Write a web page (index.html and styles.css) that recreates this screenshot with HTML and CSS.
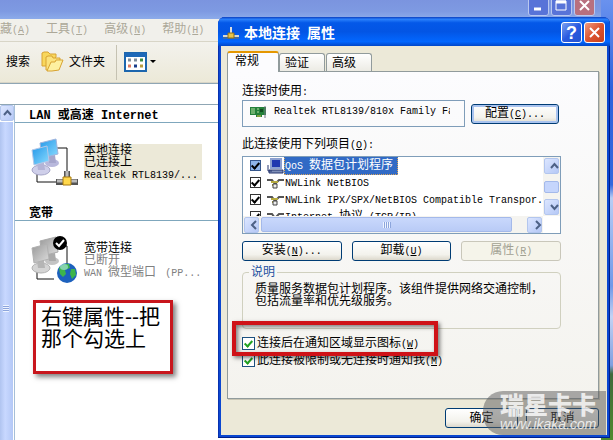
FILE: index.html
```html
<!DOCTYPE html>
<html lang="zh-CN">
  <head>
    <meta charset="UTF-8" />
    <meta name="viewport" content="width=device-width, initial-scale=1.0" />
    <title>本地连接 属性</title>
    <link rel="stylesheet" href="styles.css">
  </head>
  <body>
    <!-- Network connections window -->
    <div class="explorer">
      <div class="explorer-title">
        <button class="cap-btn faded" aria-label="最小化"><svg width="20" height="20"><path d="M5 13h7" stroke="#fff" stroke-width="3"/></svg></button>
        <button class="cap-btn faded" aria-label="最大化"><svg width="20" height="20"><path d="M4 5h10v9H4z" fill="none" stroke="#fff"/><path d="M4 6h10" stroke="#fff" stroke-width="3"/></svg></button>
        <button class="cap-btn faded close" aria-label="关闭"><svg width="20" height="20"><path d="M5 5l9 9M14 5l-9 9" stroke="#fff" stroke-width="2"/></svg></button>
      </div>
      <div class="menubar">
        <span>藏<i>(<u>A</u>)</i></span>
        <span>工具<i>(<u>T</u>)</i></span>
        <span>高级<i>(<u>N</u>)</i></span>
        <span>帮助<i>(<u>H</u>)</i></span>
      </div>
      <div class="toolbar">
        <button class="tool">搜索</button>
        <button class="tool folders">
          <svg width="24" height="22" viewBox="0 0 24 22">
            <path d="M1 15V2l2-1h4l2 2h6v3l-7 9z" fill="#f8d75c" stroke="#d8a332"/>
            <path d="M5 19V6l2-1h4l1 2h7v4l-3 8z" fill="#fbe27c" stroke="#d8a332"/>
            <path d="M6 20l4-9h4l1-2h7l-4 10-7 1z" fill="#fdf0a0" stroke="#d8a332"/>
          </svg>
          文件夹
        </button>
        <button class="tool views" aria-label="查看">
          <svg width="32" height="20" viewBox="0 0 32 20">
            <rect x="1" y="1" width="21" height="18" fill="#fff" stroke="#1c66ae" stroke-width="2"/>
            <path d="M1 3h21" stroke="#1d68b8" stroke-width="4"/>
            <path d="M4 8h3M10 8h3" stroke="#7d8b99" stroke-width="3"/>
            <path d="M16 8h3" stroke="#3c8a41" stroke-width="3"/>
            <path d="M4 14h3" stroke="#dc7a60" stroke-width="3"/>
            <path d="M10 14h3" stroke="#183c8a" stroke-width="3"/>
            <path d="M16 14h3" stroke="#b89c3e" stroke-width="3"/>
            <path d="M26 8h6l-3 3z" fill="#000"/>
          </svg>
        </button>
      </div>
      <div class="address"></div>
      <div class="explorer-body">
        <div class="side-scroll">
          <button class="scroll-btn" aria-label="向上"><svg width="13" height="14"><path d="M3 9l3.500-4 3.500 4" fill="none" stroke="#4d6185" stroke-width="2"/></svg></button>
          <div class="side-thumb"></div>
        </div>
        <div class="connections">
          <h2><b>LAN </b>或高速<b> Internet</b></h2>
          <div class="connection selected">
            <svg width="50" height="50" viewBox="0 0 50 50">
              <defs>
                <linearGradient id="screen" x1="0" y1="0" x2="1" y2="1"><stop offset="0" stop-color="#2497e8"/><stop offset="1" stop-color="#8adcff"/></linearGradient>
                <linearGradient id="dead" x1="0" y1="0" x2="1" y2="1"><stop offset="0" stop-color="#999"/><stop offset="1" stop-color="#ddd"/></linearGradient>
              </defs>
              <path d="M26 10h10v27M6 35v9h20" fill="none" stroke="#111"/>
              <ellipse cx="21" cy="25" rx="7" ry="4" fill="#b8b8dc"/>
              <path d="M17 18l7-1 1 8h-7z" fill="#a6a6cc"/>
              <path d="M9 5l16-4 2 15-16 4z" fill="url(#screen)" stroke="#9fb4dd"/>
              <ellipse cx="10" cy="32" rx="9" ry="5" fill="#cfcfea" stroke="#a5a5c8"/>
              <path d="M6 25l7-1 1 8H7z" fill="#b4b4d6"/>
              <path d="M1 12l15-4 2 15-15 4z" fill="url(#screen)" stroke="#b5c8e8"/>
              <path d="M36 33v6M25 44h22" stroke="#555" stroke-width="6"/>
              <path d="M36 33v6M26 43h20" stroke="#bbb" stroke-width="3"/>
              <path d="M32 39h8v8h-8z" fill="#ffd84c" stroke="#a97b10"/>
            </svg>
            <p>本地连接<br>已连接上<br><i>Realtek RTL8139/...</i></p>
          </div>
          <h2>宽带</h2>
          <div class="connection">
            <svg width="50" height="50" viewBox="0 0 50 50">
              <path d="M26 10h10v18M6 35v8h17" fill="none" stroke="#111"/>
              <ellipse cx="21" cy="25" rx="7" ry="4" fill="#c4c4c4"/>
              <path d="M17 18l7-1 1 8h-7z" fill="#aaa"/>
              <path d="M9 5l16-4 2 15-16 4z" fill="url(#dead)" stroke="#aaa"/>
              <ellipse cx="10" cy="32" rx="9" ry="5" fill="#d4d4d4" stroke="#b0b0b0"/>
              <path d="M6 25l7-1 1 8H7z" fill="#b5b5b5"/>
              <path d="M1 12l15-4 2 15-15 4z" fill="url(#dead)" stroke="#b0b0b0"/>
              <circle cx="29" cy="7" r="7" fill="#000"/>
              <path d="M25 7l3 3 5-6" fill="none" stroke="#fff" stroke-width="2"/>
              <circle cx="36" cy="37" r="10" fill="#1d61bd"/>
              <path d="M28 32q4-5 10-4l1 4-5 2 1 4-3 3-3-3z" fill="#3eb54a"/>
              <path d="M40 33l4 0 1 6-4 4-2-5z" fill="#3eb54a"/>
              <ellipse cx="33" cy="31" rx="4" ry="3" fill="#b6e8f0" opacity=".6"/>
            </svg>
            <p>宽带连接<br><span>已断开<br><i>WAN </i>微型端口 <i> (PP...</i></span></p>
          </div>
        </div>
      </div>
    </div>

    <div class="note">右键属性--把那个勾选上</div>

    <!-- Connection properties dialog -->
    <div class="dialog">
      <div class="dialog-title">
        <svg width="16" height="16" viewBox="0 0 16 16">
          <path d="M0 11h16" stroke="#d8d8d0" stroke-width="2"/><path d="M0 13h16" stroke="#77755a"/><path d="M8 2v7" stroke="#ddd" stroke-width="2"/><path d="M5 8h6v5H5z" fill="#e8c44a" stroke="#8d6e17"/>
        </svg>
        <h1>本地连接&ensp;属性</h1>
        <button class="cap-btn" aria-label="帮助">?</button>
        <button class="cap-btn close" aria-label="关闭"><svg width="20" height="20"><path d="M5 5l9 9M14 5l-9 9" stroke="#fff" stroke-width="2"/></svg></button>
      </div>
      <div class="dialog-body">
        <div class="tabs">
          <button class="tab active">常规</button>
          <button class="tab">验证</button>
          <button class="tab">高级</button>
        </div>
        <div class="panel">
          <p class="caption">连接时使用<i>:</i></p>
          <div class="adapter-row">
            <div class="adapter">
              <svg width="16" height="12" viewBox="0 0 16 12">
                <path d="M0 1h16v8h-4v2H6V9H0z" fill="#23803a"/>
                <path d="M1 3h4M1 5h4M1 7h4M7 3h2M7 6h2" stroke="#b8e0a0"/>
                <path d="M10 3h3v3h-3z" fill="#104c20"/><path d="M7 10h4" stroke="#e0c040"/><path d="M15 0v12" stroke="#778" stroke-width="1"/>
              </svg>
              <i>Realtek RTL8139/810x Family Fast</i>
            </div>
            <button class="btn default">配置<i>(<u>C</u>)...</i></button>
          </div>
          <p class="caption">此连接使用下列项目<i>(<u>O</u>):</i></p>
          <div class="components">
            <ul>
              <li class="current">
                <label><input type="checkbox" checked>
                <svg width="17" height="16" viewBox="0 0 17 16"><path d="M4 1h10v9H4z" fill="#2038b0" stroke="#8ca0d0" stroke-width="2"/><path d="M2 12h14v3H2z" fill="#8090b8" stroke="#24356e"/><path d="M1 7v6h4" fill="none" stroke="#24356e"/></svg>
                <span><i>QoS </i>数据包计划程序</span></label>
              </li>
              <li>
                <label><input type="checkbox" checked>
                <svg width="17" height="16" viewBox="0 0 17 16"><path d="M0 5h5l3 4M17 5h-5L8 9" fill="none" stroke="#555" stroke-width="2"/><path d="M4 7h7M5 10h5" stroke="#b5a93e" stroke-width="2"/><path d="M6 9h4v4H6z" fill="#eee" stroke="#444"/></svg>
                <span><i>NWLink NetBIOS</i></span></label>
              </li>
              <li>
                <label><input type="checkbox" checked>
                <svg width="17" height="16" viewBox="0 0 17 16"><path d="M0 5h5l3 4M17 5h-5L8 9" fill="none" stroke="#555" stroke-width="2"/><path d="M4 7h7M5 10h5" stroke="#b5a93e" stroke-width="2"/><path d="M6 9h4v4H6z" fill="#eee" stroke="#444"/></svg>
                <span><i>NWLink IPX/SPX/NetBIOS Compatible Transpor.</i></span></label>
              </li>
              <li>
                <label><input type="checkbox" checked>
                <svg width="17" height="16" viewBox="0 0 17 16"><path d="M0 5h5l3 4M17 5h-5L8 9" fill="none" stroke="#555" stroke-width="2"/></svg>
                <span><i>Internet </i>协议<i> (TCP/IP)</i></span></label>
              </li>
            </ul>
            <div class="vscroll">
              <button class="scroll-btn" aria-label="向上"><svg width="13" height="14"><path d="M3 9l3.500-4 3.500 4" fill="none" stroke="#4d6185" stroke-width="2"/></svg></button>
              <div class="vthumb"></div>
              <button class="scroll-btn" aria-label="向下"><svg width="13" height="14"><path d="M3 5l3.500 4 3.500-4" fill="none" stroke="#4d6185" stroke-width="2"/></svg></button>
            </div>
            <div class="hscroll">
              <button class="scroll-btn" aria-label="向左"><svg width="13" height="14"><path d="M8 3L4 7l4 4" fill="none" stroke="#4d6185" stroke-width="2"/></svg></button>
              <div class="hthumb"></div>
              <button class="scroll-btn" aria-label="向右"><svg width="13" height="14"><path d="M5 3l4 4-4 4" fill="none" stroke="#4d6185" stroke-width="2"/></svg></button>
            </div>
          </div>
          <div class="actions">
            <button class="btn">安装<i>(<u>N</u>)...</i></button>
            <button class="btn">卸载<i>(<u>U</u>)</i></button>
            <button class="btn" disabled>属性<i>(<u>R</u>)</i></button>
          </div>
          <fieldset>
            <legend>说明</legend>
            质量服务数据包计划程序。该组件提供网络交通控制，包括流量率和优先级服务。
          </fieldset>
          <label class="option"><input type="checkbox" checked><span>连接后在通知区域显示图标<i>(<u>W</u>)</i></span></label>
          <label class="option"><input type="checkbox" checked><span>此连接被限制或无连接时通知我<i>(<u>M</u>)</i></span></label>
          <div class="highlight"></div>
        </div>
        <div class="footer">
          <button class="btn">确定</button>
          <button class="btn">取消</button>
        </div>
      </div>
      <div class="watermark"><b>瑞星卡卡</b><em>www.ikaka.com</em></div>
    </div>
  </body>
</html>
```
FILE: styles.css
```css
* {
  box-sizing: border-box;
}

body {
  margin: 0;
  min-height: 100vh;
  position: relative;
  overflow: hidden;
  font-family: "Liberation Sans", "Noto Sans CJK SC", sans-serif;
  font-size: 12px;
  line-height: 12px;
  color: #000;
  background: linear-gradient(#6a92ee, #2f63dc 20%, #3468dd 42%, #b8cdf4 45%, #6f98e8 65%, #c3d2f3 72%, #7f9fe0 83%, #3e6a3c 85%, #4f8a2e);
}

h1, h2, p, ul {
  margin: 0;
  padding: 0;
}

/* half-width latin text */
i {
  font-family: "Liberation Mono", monospace;
  font-size: 10px;
  font-style: normal;
  white-space: pre;
}

button {
  font: inherit;
  color: inherit;
  padding: 0;
}

svg {
  display: block;
  flex: none;
}

/* Explorer window */
.explorer {
  margin-right: 12px;
  min-height: 100vh;
  display: flex;
  flex-direction: column;
  background: #fff;
}

.explorer-title {
  height: 19px;
  display: flex;
  justify-content: flex-end;
  align-items: flex-end;
  gap: 2px;
  padding: 0 6px 3px;
  background: linear-gradient(#7b94df, #7e9ae2 60%, #8cabea);
}

.cap-btn {
  width: 21px;
  height: 21px;
  flex: none;
  display: flex;
  justify-content: center;
  align-items: center;
  border: 1px solid #fff;
  border-radius: 3px;
  background: linear-gradient(135deg, #7ba0f0, #2a5ae0 50%, #2453d0);
  color: #fff;
  font-size: 18px;
  font-weight: bold;
}

.cap-btn.close {
  background: linear-gradient(135deg, #ef9a80, #dc5430 50%, #c8401c);
}

.cap-btn.faded {
  border-color: #b9c8f0;
  background: #5873d8;
}

.cap-btn.faded.close {
  background: #b8707f;
}

.menubar {
  height: 23px;
  display: flex;
  align-items: center;
  gap: 16px;
  color: #aca899;
  background: #f1f0eb;
  border-bottom: 1px solid #d8d5c7;
}

.toolbar {
  height: 41px;
  display: flex;
  align-items: center;
  padding-left: 6px;
  background: linear-gradient(#f3f2ed, #ece9d8);
  border-bottom: 1px solid #d8d5c7;
}

.tool {
  display: flex;
  align-items: center;
  gap: 4px;
  border: 0;
  background: none;
}

.folders {
  margin: 0 11px 0 11px;
}

.views {
  height: 35px;
  padding-left: 7px;
  border-left: 1px solid #c5c2b2;
}

.address {
  height: 22px;
  border-top: 1px solid #8fa6b4;
  border-bottom: 1px solid #8fa6b4;
}

.explorer-body {
  flex: 1;
  display: flex;
}

.side-scroll {
  width: 15px;
  border-right: 1px solid #a6bfd8;
  background: #fff;
  display: flex;
  flex-direction: column;
}

.scroll-btn {
  width: 15px;
  height: 16px;
  flex: none;
  display: flex;
  align-items: center;
  justify-content: center;
  border: 1px solid #b3c6ee;
  border-radius: 2px;
  background: linear-gradient(135deg, #dce6ff, #b5c8f6);
}

.side-scroll .scroll-btn {
  width: 14px;
}

.side-thumb {
  flex: 1;
  margin: 1px 1px 0 0;
  background:
    repeating-linear-gradient(#eef4ff 0 1px, #8ca5dc 1px 2px) 3px 183px / 6px 7px no-repeat,
    linear-gradient(90deg, #b0c4f0, #c8d8ff 40%, #b4c8f6);
}

.connections {
  flex: 1;
}

.connections h2 {
  height: 18px;
  padding: 4px 14px 0;
  font-size: 12px;
  line-height: 12px;
  border-bottom: 1px solid #7fa7bd;
}

.connections h2 b {
  font-family: "Liberation Mono", monospace;
  white-space: pre;
}

.connection {
  display: flex;
  gap: 3px;
  padding: 15px 0 0 16px;
  height: 80px;
}

.connection p {
  width: 118px;
  height: 36px;
  margin-top: 6px;
}

.connection.selected p {
  background: #ece9d8;
}

.connection p span {
  color: #808080;
}

.note {
  position: absolute;
  left: 33px;
  top: 300px;
  width: 140px;
  height: 74px;
  padding: 3px 5px;
  border: 3px solid #c8161d;
  background: #fff;
  box-shadow: 3px 3px 5px rgba(0, 0, 0, 0.5);
  font-size: 21px;
  line-height: 22px;
}

/* Properties dialog */
.dialog {
  position: absolute;
  left: 218px;
  right: 3px;
  top: 17px;
  padding: 0 3px 3px;
  border-radius: 7px 7px 0 0;
  background: #0b47d0;
  box-shadow: inset -1px -1px #001f8c, inset 1px 0 #0831b0;
}

.dialog-title {
  height: 29px;
  margin: 0 -3px;
  padding: 2px 5px 0;
  display: flex;
  align-items: center;
  gap: 2px;
  border-radius: 7px 7px 0 0;
  color: #fff;
  background: linear-gradient(#0a3fc0, #2a80fb 8%, #0458e8 20%, #0355e4 50%, #0267ff 85%, #0146c8);
}

.dialog-title h1 {
  flex: 1;
  margin-left: 3px;
  font-size: 14px;
  line-height: 16px;
}

.dialog-body {
  padding: 5px 8px 7px 6px;
  background: #ece9d8;
}

.tabs {
  display: flex;
  align-items: flex-end;
  height: 20px;
}

.tab {
  width: 46px;
  height: 18px;
  padding: 0 14px 0 4px;
  margin-right: 1px;
  white-space: nowrap;
  border: 1px solid #919b9c;
  border-bottom: 0;
  border-radius: 3px 3px 0 0;
  background: linear-gradient(#fff, #ecebe4);
}

.tab.active {
  width: 52px;
  height: 21px;
  margin: 0 0 -1px;
  padding: 0 18px 3px 6px;
  position: relative;
  z-index: 1;
  border-top: 2px solid #e59700;
  background: #fcfcfe;
}

.panel {
  position: relative;
  height: 328px;
  padding: 13px 37px 0 14px;
  border: 1px solid #919b9c;
  background: linear-gradient(#fcfcfe, #f4f3ee);
  box-shadow: 1px 1px #c8c5b4;
}

.adapter-row {
  display: flex;
  align-items: center;
  gap: 6px;
  margin: 3px 0 11px;
}

.adapter {
  flex: 1;
  min-width: 0;
  height: 27px;
  display: flex;
  align-items: center;
  gap: 8px;
  padding: 0 14px 3px 7px;
  border: 1px solid #7f9db9;
}

.adapter i {
  flex: 1;
  overflow: hidden;
}

.caption {
  height: 12px;
}

.btn {
  height: 20px;
  border: 1px solid #003c74;
  border-radius: 3px;
  background: linear-gradient(#fff, #f3f2ec 70%, #dcd8cc);
}

.btn.default {
  width: 88px;
  margin-right: 2px;
  box-shadow: inset 0 0 0 2px #a9c3ef;
}

.btn:disabled {
  color: #a1a192;
  border-color: #c9c7ba;
  background: #f5f4ea;
}

.components {
  height: 78px;
  margin-top: 6px;
  display: grid;
  grid-template-columns: 1fr 17px;
  grid-template-rows: 59px 17px;
  border: 1px solid #7f9db9;
  background: #fff;
}

.components ul {
  overflow: hidden;
  list-style: none;
}

.components li {
  height: 17px;
}

.components label {
  display: flex;
  align-items: center;
  height: 17px;
  padding-left: 7px;
}

.components svg {
  margin-left: 6px;
}

.components span {
  padding: 3px 5px 2px 1px;
  white-space: nowrap;
}

.current span {
  color: #fff;
  background: #316ac5;
  outline: 1px dotted #d8a45c;
  outline-offset: -1px;
}

input[type="checkbox"] {
  appearance: none;
  width: 11px;
  height: 11px;
  flex: none;
  margin: 0;
  border: 1px solid #333;
  background: #fff;
  display: grid;
  place-items: center;
}

input[type="checkbox"]::after {
  content: "";
  width: 3px;
  height: 6px;
  margin-top: -2px;
  border: solid #000;
  border-width: 0 2px 2px 0;
  box-sizing: content-box;
  transform: rotate(42deg);
}

.current input[type="checkbox"] {
  background: #8fb4e8;
  border-color: #35568c;
}

.vscroll {
  display: flex;
  flex-direction: column;
  justify-content: space-between;
  align-items: center;
  padding: 1px 0;
  background: #f5f4f0;
}

.vthumb {
  width: 15px;
  height: 12px;
  border: 1px solid #a4b9ea;
  border-radius: 2px;
  background: #c5d5fc;
}

.hscroll {
  display: flex;
  align-items: center;
  padding: 0 1px;
  background: #f5f4f0;
}

.hthumb {
  flex: 1;
  height: 15px;
  margin: 0 15px 0 2px;
  border: 1px solid #a4b9ea;
  border-radius: 2px;
  background:
    repeating-linear-gradient(90deg, #eef4ff 0 1px, #8ca5dc 1px 2px) center / 8px 6px no-repeat,
    linear-gradient(#c9d8fc, #b9cbf6);
}

.actions {
  display: grid;
  grid-template-columns: 1fr 1fr 1fr;
  gap: 10px;
  margin: 7px 0 5px;
}

fieldset {
  min-width: 0;
  height: 63px;
  margin: 0;
  padding: 5px 12px 0;
  border: 1px solid #d0d0bf;
  border-radius: 4px;
}

legend {
  margin-left: -6px;
  padding: 0 2px;
  color: #1d50a0;
}

.option {
  display: flex;
  align-items: center;
  gap: 2px;
  width: max-content;
  height: 17px;
}

fieldset + .option {
  margin-top: 6px;
}

.option input[type="checkbox"] {
  width: 13px;
  height: 13px;
  border-color: #1c5180;
}

.option input[type="checkbox"]::after {
  border-color: #21a121;
}

.highlight {
  position: absolute;
  left: 4px;
  top: 249px;
  width: 206px;
  height: 35px;
  border: 4px solid #cf1217;
  box-shadow: 2px 2px 4px rgba(0, 0, 0, 0.5), inset 2px 2px 4px rgba(0, 0, 0, 0.5);
  pointer-events: none;
}

.footer {
  display: flex;
  justify-content: flex-end;
  gap: 8px;
  padding-top: 9px;
}

.footer .btn {
  width: 73px;
}

.watermark {
  position: absolute;
  right: 4px;
  bottom: 3px;
  width: 123px;
  height: 44px;
  padding: 4px 0 0 17px;
  border-radius: 20px 0 0 20px;
  color: rgba(255, 255, 255, 0.8);
  background: rgba(90, 90, 90, 0.5);
  pointer-events: none;
}

.watermark b {
  display: block;
  font-size: 24px;
  line-height: 22px;
  font-weight: 900;
}

.watermark em {
  display: block;
  font-size: 14px;
  line-height: 14px;
}
```
